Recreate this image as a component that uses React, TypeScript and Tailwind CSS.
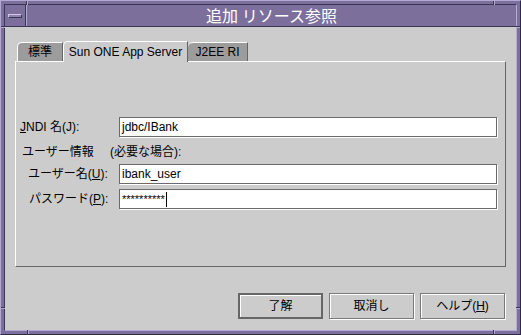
export default function App() {
  const tick = "absolute bg-[#3b3556]";
  const tickL = "absolute bg-[#b3a9d3]";
  const input =
    "flex-1 mr-[8px] h-[20px] bg-white border border-[#6b6b6b] shadow-[1px_1px_0_#ffffff] flex items-center pl-[2px] text-[12px] text-black";
  return (
    <div className="relative w-[521px] h-[335px] bg-[#7d6f9c] border border-t-[#b3a9d3] border-l-[#b3a9d3] border-r-[#2e2944] border-b-[#2e2944] p-[3px] font-['Liberation_Sans','Noto_Sans_CJK_JP',sans-serif] overflow-hidden">
      {/* resize handle ticks */}
      <div className={`${tick} left-[25px] top-0 w-[1px] h-[4px]`} />
      <div className={`${tickL} left-[26px] top-0 w-[1px] h-[4px]`} />
      <div className={`${tick} top-[25px] left-0 h-[1px] w-[4px]`} />
      <div className={`${tickL} top-[26px] left-0 h-[1px] w-[4px]`} />
      <div className={`${tick} left-[492px] top-0 w-[1px] h-[4px]`} />
      <div className={`${tickL} left-[493px] top-0 w-[1px] h-[4px]`} />
      <div className={`${tick} top-[25px] right-0 h-[1px] w-[4px]`} />
      <div className={`${tickL} top-[26px] right-0 h-[1px] w-[4px]`} />
      <div className={`${tick} left-[26px] bottom-0 w-[1px] h-[4px]`} />
      <div className={`${tickL} left-[27px] bottom-0 w-[1px] h-[4px]`} />
      <div className={`${tick} top-[306px] left-0 h-[1px] w-[4px]`} />
      <div className={`${tickL} top-[307px] left-0 h-[1px] w-[4px]`} />
      <div className={`${tick} left-[492px] bottom-0 w-[1px] h-[4px]`} />
      <div className={`${tickL} left-[493px] bottom-0 w-[1px] h-[4px]`} />
      <div className={`${tick} top-[306px] right-0 h-[1px] w-[4px]`} />
      <div className={`${tickL} top-[307px] right-0 h-[1px] w-[4px]`} />

      <div className="h-full flex flex-col border border-t-[#3b3556] border-l-[#3b3556] border-r-[#b3a9d3] border-b-[#b3a9d3]">
        {/* title bar */}
        <div className="h-[22px] flex border-b border-[#3b3556] bg-[#7d6f9c]">
          <div className="w-[21px] h-full border-r border-[#3b3556] flex items-center justify-center">
            <div className="w-[14px] h-[4px] border border-t-[#d0c8ea] border-l-[#d0c8ea] border-r-[#3b3556] border-b-[#3b3556] bg-[#8f82b2]" />
          </div>
          <div className="flex-1 border-l border-[#b3a9d3] flex items-center justify-center text-white text-[16px] leading-[21px] font-['Noto_Sans_CJK_JP',sans-serif]">
            追加 リソース参照
          </div>
        </div>

        {/* content */}
        <div className="flex-1 bg-[#cccccc] flex flex-col px-[10px]">
          {/* tabs */}
          <div className="mt-[14px] h-[20px] flex items-end pl-[2px]">
            <div className="w-[46px] h-[19px] bg-[#9c9c9c] border-t border-l border-white border-r border-r-[#666666] rounded-tl-[5px] flex items-center justify-center text-[12px] text-black">
              標準
            </div>
            <div className="relative z-10 w-[125px] h-[21px] -mb-[1px] bg-[#cccccc] border-t border-l border-white border-r border-r-[#666666] rounded-tl-[5px] flex items-center justify-center text-[12px] text-black pb-[1px]">
              Sun ONE App Server
            </div>
            <div className="w-[60px] h-[19px] bg-[#9c9c9c] border-t border-white border-r border-r-[#666666] rounded-tl-[5px] flex items-center justify-center text-[12px] text-black">
              J2EE RI
            </div>
          </div>

          {/* panel */}
          <div className="h-[206px] border border-t-white border-l-white border-r-[#666666] border-b-[#666666] flex flex-col text-[12px] text-black">
            <div className="mt-[55px] flex items-center">
              <div className="w-[103px] pl-[4px]">
                <span className="underline">J</span>NDI 名(J):
              </div>
              <div className={input}>jdbc/IBank</div>
            </div>
            <div className="mt-[5px] h-[20px] flex items-center">
              <div className="w-[94px] pl-[6px]">ユーザー情報</div>
              <div>(必要な場合):</div>
            </div>
            <div className="mt-[2px] flex items-center">
              <div className="w-[103px] pl-[12px]">
                ユーザー名(<span className="underline">U</span>):
              </div>
              <div className={input}>ibank_user</div>
            </div>
            <div className="mt-[5px] flex items-center">
              <div className="w-[103px] pl-[13px]">
                パスワード(<span className="underline">P</span>):
              </div>
              <div className={input}>
                <span className="text-[11px] leading-none">**********</span>
                <span className="ml-[1px] w-[1px] h-[15px] bg-black" />
              </div>
            </div>
          </div>

          {/* buttons */}
          <div className="mt-[26px] flex justify-end gap-[6px] pr-[1px]">
            <div className="w-[85px] h-[26px] border-2 border-[#666666] shadow-[inset_1px_1px_0_#ffffff] flex items-center justify-center text-[12px] text-black">
              了解
            </div>
            <div className="w-[85px] h-[26px] border border-[#7a7a7a] shadow-[inset_1px_1px_0_#ffffff,1px_1px_0_#ffffff] flex items-center justify-center text-[12px] text-black">
              取消し
            </div>
            <div className="w-[85px] h-[26px] border border-[#7a7a7a] shadow-[inset_1px_1px_0_#ffffff,1px_1px_0_#ffffff] flex items-center justify-center text-[12px] text-black">
              ヘルプ(<span className="underline">H</span>)
            </div>
          </div>
        </div>
      </div>
    </div>
  );
}
